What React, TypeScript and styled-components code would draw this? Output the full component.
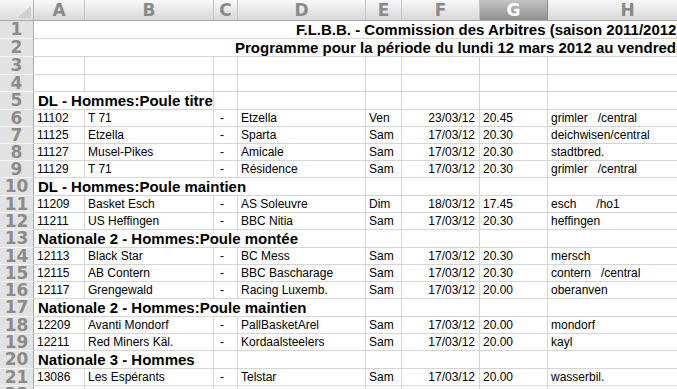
import React from "react";
import styled, { createGlobalStyle } from "styled-components";

const COLS = "34px 51px 129px 24px 128px 36px 78px 68px 160px";
const GRID = "#d5d5d5";

const GlobalStyle = createGlobalStyle`
  html, body { margin: 0; padding: 0; background: #ffffff; overflow: hidden; }
  body { font-family: "Liberation Sans", Arial, sans-serif; }
`;

const Sheet = styled.div`
  width: 708px;
  display: flex;
  flex-direction: column;
`;

const Row = styled.div<{ $h: number }>`
  display: grid;
  grid-template-columns: ${COLS};
  height: ${(p) => p.$h}px;
`;

const HeaderRow = styled.div`
  display: grid;
  grid-template-columns: ${COLS};
  height: 21px;
`;

const Corner = styled.div`
  position: relative;
  background: linear-gradient(#f7f7f7, #dcdcdc);
  border-right: 1px solid #b4b4b4;
  border-bottom: 1px solid #a9a9a9;
  box-sizing: border-box;
`;

const CornerMark = styled.svg`
  position: absolute;
  right: 2px;
  bottom: 2px;
`;

const ColHead = styled.div<{ $active?: boolean }>`
  box-sizing: border-box;
  border-right: 1px solid ${(p) => (p.$active ? "#8a8a8a" : "#c4c4c4")};
  border-bottom: 1px solid #a9a9a9;
  background: ${(p) =>
    p.$active
      ? "linear-gradient(#c4c4c4, #8f8f8f)"
      : "linear-gradient(#f8f8f8, #d8d8d8)"};
  color: ${(p) => (p.$active ? "#ffffff" : "#8a8a8a")};
  font-family: "DejaVu Sans", sans-serif;
  font-weight: bold;
  font-size: 17px;
  line-height: 20px;
  text-align: center;
`;

const RowNum = styled.div<{ $h: number }>`
  box-sizing: border-box;
  background: #e2e2e2;
  border-right: 1px solid #a9a9a9;
  border-bottom: 1px solid #f4f4f4;
  color: #8b8b8b;
  font-family: "DejaVu Sans", sans-serif;
  font-weight: bold;
  font-size: 17px;
  line-height: ${(p) => p.$h - 1}px;
  text-align: center;
`;

const Cell = styled.div<{ $align?: "left" | "right"; $indent?: number }>`
  box-sizing: border-box;
  border-right: 1px solid ${GRID};
  border-bottom: 1px solid ${GRID};
  font-size: 12px;
  line-height: 15px;
  color: #000;
  padding: 0 4px 0 ${(p) => p.$indent ?? 3}px;
  white-space: pre;
  overflow: hidden;
  display: flex;
  align-items: center;
  justify-content: ${(p) => (p.$align === "right" ? "flex-end" : "flex-start")};
`;

const TitleCell = styled.div<{ $offset: number }>`
  grid-column: span 8;
  box-sizing: border-box;
  border-bottom: 1px solid ${GRID};
  font-size: 15px;
  line-height: 17px;
  font-weight: bold;
  color: #000;
  white-space: pre;
  overflow: hidden;
  padding-left: ${(p) => p.$offset}px;
  display: flex;
  align-items: center;
`;

const HeadingCell = styled.div<{ $span: number }>`
  grid-column: span ${(p) => p.$span};
  box-sizing: border-box;
  border-right: 1px solid ${GRID};
  border-bottom: 1px solid ${GRID};
  font-size: 15px;
  line-height: 17px;
  font-weight: bold;
  color: #000;
  padding-left: 4px;
  white-space: pre;
  overflow: hidden;
  display: flex;
  align-items: center;
`;

type Match = [string, string, string, string, string, string, string];
type Line =
  | { kind: "match"; data: Match }
  | { kind: "heading"; text: string; span: number }
  | { kind: "empty" };

const LETTERS = ["A", "B", "C", "D", "E", "F", "G", "H"];

const lines: Line[] = [
  { kind: "heading", text: "DL - Hommes:Poule titre", span: 2 },
  { kind: "match", data: ["11102", "T 71", "Etzella", "Ven", "23/03/12", "20.45", "grimler   /central"] },
  { kind: "match", data: ["11125", "Etzella", "Sparta", "Sam", "17/03/12", "20.30", "deichwisen/central"] },
  { kind: "match", data: ["11127", "Musel-Pikes", "Amicale", "Sam", "17/03/12", "20.30", "stadtbred."] },
  { kind: "match", data: ["11129", "T 71", "Résidence", "Sam", "17/03/12", "20.30", "grimler   /central"] },
  { kind: "heading", text: "DL - Hommes:Poule maintien", span: 4 },
  { kind: "match", data: ["11209", "Basket Esch", "AS Soleuvre", "Dim", "18/03/12", "17.45", "esch      /ho1"] },
  { kind: "match", data: ["11211", "US Heffingen", "BBC Nitia", "Sam", "17/03/12", "20.30", "heffingen"] },
  { kind: "heading", text: "Nationale 2 - Hommes:Poule montée", span: 4 },
  { kind: "match", data: ["12113", "Black Star", "BC Mess", "Sam", "17/03/12", "20.30", "mersch"] },
  { kind: "match", data: ["12115", "AB Contern", "BBC Bascharage", "Sam", "17/03/12", "20.30", "contern   /central"] },
  { kind: "match", data: ["12117", "Grengewald", "Racing Luxemb.", "Sam", "17/03/12", "20.00", "oberanven"] },
  { kind: "heading", text: "Nationale 2 - Hommes:Poule maintien", span: 4 },
  { kind: "match", data: ["12209", "Avanti Mondorf", "PallBasketArel", "Sam", "17/03/12", "20.00", "mondorf"] },
  { kind: "match", data: ["12211", "Red Miners Käl.", "Kordaalsteelers", "Sam", "17/03/12", "20.00", "kayl"] },
  { kind: "heading", text: "Nationale 3 - Hommes", span: 2 },
  { kind: "match", data: ["13086", "Les Espérants", "Telstar", "Sam", "17/03/12", "20.00", "wasserbil."] },
  { kind: "empty" },
];

const EmptyCells: React.FC<{ count: number }> = ({ count }) => (
  <>
    {Array.from({ length: count }).map((_, i) => (
      <Cell key={i} />
    ))}
  </>
);

export default function App() {
  return (
    <>
      <GlobalStyle />
      <Sheet>
        <HeaderRow>
          <Corner>
            <CornerMark width="14" height="12" viewBox="0 0 14 12">
              <polygon points="0,12 14,12 14,0" fill="#cfcfcf" />
            </CornerMark>
          </Corner>
          {LETTERS.map((l) => (
            <ColHead key={l} $active={l === "G"}>
              {l}
            </ColHead>
          ))}
        </HeaderRow>

        <Row $h={18}>
          <RowNum $h={18}>1</RowNum>
          <TitleCell $offset={262}>F.L.B.B. - Commission des Arbitres (saison 2011/2012)</TitleCell>
        </Row>
        <Row $h={18}>
          <RowNum $h={18}>2</RowNum>
          <TitleCell $offset={201}>Programme pour la période du lundi 12 mars 2012 au vendredi 23 mars 2012</TitleCell>
        </Row>
        <Row $h={18}>
          <RowNum $h={18}>3</RowNum>
          <EmptyCells count={8} />
        </Row>
        <Row $h={17}>
          <RowNum $h={17}>4</RowNum>
          <EmptyCells count={8} />
        </Row>

        {lines.map((line, i) => {
          const n = i + 5;
          if (line.kind === "heading") {
            return (
              <Row key={n} $h={18}>
                <RowNum $h={18}>{n}</RowNum>
                <HeadingCell $span={line.span}>{line.text}</HeadingCell>
                <EmptyCells count={8 - line.span} />
              </Row>
            );
          }
          if (line.kind === "empty") {
            return (
              <Row key={n} $h={17}>
                <RowNum $h={17}>{n}</RowNum>
                <EmptyCells count={8} />
              </Row>
            );
          }
          const [id, home, away, day, date, time, hall] = line.data;
          return (
            <Row key={n} $h={17}>
              <RowNum $h={17}>{n}</RowNum>
              <Cell>{id}</Cell>
              <Cell>{home}</Cell>
              <Cell $indent={6}>-</Cell>
              <Cell>{away}</Cell>
              <Cell>{day}</Cell>
              <Cell $align="right">{date}</Cell>
              <Cell>{time}</Cell>
              <Cell>{hall}</Cell>
            </Row>
          );
        })}
      </Sheet>
    </>
  );
}
